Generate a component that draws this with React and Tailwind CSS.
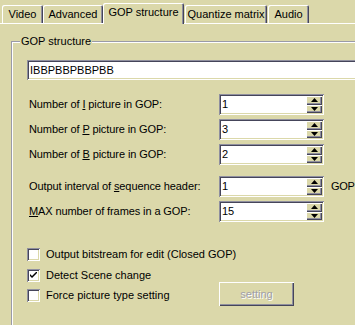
import React from 'react';

const sunken =
  'shadow-[inset_1px_1px_#8f8f9f,inset_-1px_-1px_#ffffff,inset_2px_2px_#45455a,inset_-2px_-2px_#dbd8aa]';
const raised =
  'shadow-[inset_1px_1px_#ffffff,inset_-1px_-1px_#45455a,inset_-2px_-2px_#8f8f9f]';

function Tab({ label, className, active }) {
  return (
    <div
      className={
        'flex items-center justify-center bg-[#dbd8aa] rounded-t-[2px] shadow-[inset_1px_1px_#ffffff,inset_-1px_0_#45455a,inset_-2px_0_#8f8f9f] ' +
        (active ? 'h-[21px] -mb-px relative z-10 pb-[3px] ' : 'h-[18px] pt-[1px] ') +
        className
      }
    >
      {label}
    </div>
  );
}

function Arrow({ up }) {
  return (
    <div className={'flex-1 flex items-center justify-center bg-[#dbd8aa] ' + raised}>
      <svg width="7" height="4" viewBox="0 0 7 4">
        {up ? <path d="M3.5 0 L7 4 L0 4 Z" fill="#000" /> : <path d="M0 0 L7 0 L3.5 4 Z" fill="#000" />}
      </svg>
    </div>
  );
}

function Spin({ value }) {
  return (
    <div className={'w-[105px] h-[21px] bg-white flex items-stretch p-[2px] ' + sunken}>
      <div className="flex-1 pl-[1px] leading-[17px]">{value}</div>
      <div className="w-[16px] flex flex-col">
        <Arrow up />
        <Arrow />
      </div>
    </div>
  );
}

function Row({ children, value, extra, className }) {
  return (
    <div className={'flex items-center h-[21px] ' + className}>
      <div className="w-[207px] pl-[17px] whitespace-nowrap tracking-[-0.1px]">{children}</div>
      <Spin value={value} />
      {extra && <span className="ml-[7px] tracking-[-0.3px] whitespace-nowrap">{extra}</span>}
    </div>
  );
}

function Check({ checked, children, className }) {
  return (
    <div className={'flex items-center h-[13px] pl-[15px] ' + className}>
      <div className={'w-[13px] h-[13px] bg-white flex items-center justify-center ' + sunken}>
        {checked && (
          <svg width="7" height="7" viewBox="0 0 7 7">
            <path d="M0 2 L0 4 L2 6 L7 1 L7 -1 L2 4 Z" fill="#000" />
          </svg>
        )}
      </div>
      <span className="ml-[6px] whitespace-nowrap">{children}</span>
    </div>
  );
}

export default function App() {
  return (
    <div
      className="w-[355px] h-[325px] overflow-hidden bg-[#dbd8aa] text-black text-[11px]"
      style={{ fontFamily: '"Liberation Sans", Arial, sans-serif' }}
    >
      <div className="flex items-end h-[23px] pl-[2px]">
        <Tab label="Video" className="w-[41px]" />
        <Tab label="Advanced" className="w-[60px]" />
        <Tab label="GOP structure" className="w-[81px]" active />
        <Tab label="Quantize matrix" className="w-[82px] ml-[1px]" />
        <Tab label="Audio" className="w-[41px] ml-[1px]" />
      </div>
      <div className="border-t border-white pt-[17px] pl-[11px]">
        <div className="relative w-[420px] h-[320px] border border-[#9a9aa8] shadow-[inset_1px_1px_#ffffff]">
          <span className="absolute -top-[8px] left-[8px] px-[1px] bg-[#dbd8aa] leading-[14px]">GOP structure</span>
          <div className={'ml-[15px] mt-[18px] w-[340px] h-[20px] bg-white pl-[3px] leading-[20px] ' + sunken}>
            IBBPBBPBBPBB
          </div>
          <Row value="1" className="mt-[14px]">
            Number of <u>I</u> picture in GOP:
          </Row>
          <Row value="3" className="mt-[4px]">
            Number of <u>P</u> picture in GOP:
          </Row>
          <Row value="2" className="mt-[4px]">
            Number of <u>B</u> picture in GOP:
          </Row>
          <Row value="1" extra="GOP" className="mt-[11px]">
            Output interval of <u>s</u>equence header:
          </Row>
          <Row value="15" className="mt-[4px]">
            <u>M</u>AX number of frames in a GOP:
          </Row>
          <Check className="mt-[26px]">Output bitstream for edit (Closed GOP)</Check>
          <Check checked className="mt-[8px]">Detect Scene change</Check>
          <div className="flex items-start">
            <Check className="mt-[7px] w-[207px]">Force picture type setting</Check>
            <div
              className={
                'w-[75px] h-[24px] flex items-center justify-center text-[#a0a0a8] [text-shadow:1px_1px_#ffffff] ' + raised
              }
            >
              setting
            </div>
          </div>
        </div>
      </div>
    </div>
  );
}
